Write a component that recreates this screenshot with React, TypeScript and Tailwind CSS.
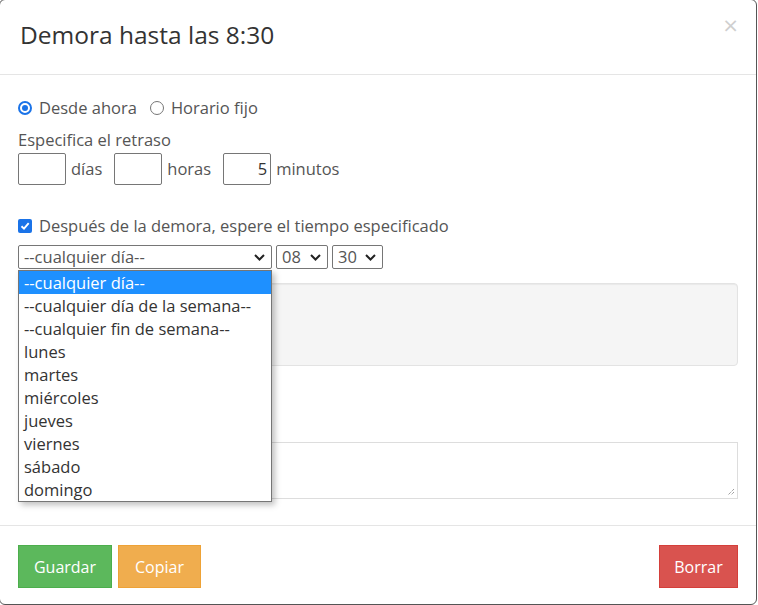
import React from "react";

const Chevron = () => (
  <svg width="11" height="7" viewBox="0 0 11 7" className="shrink-0">
    <path d="M1 1 L5.5 5.5 L10 1" fill="none" stroke="#222" strokeWidth="2" />
  </svg>
);

const FakeSelect = ({ value, w }: { value: string; w: string }) => (
  <div className={`${w} h-[24px] border border-[#767676] rounded-[2px] flex items-center justify-between pl-[5px] pr-[6px] text-[16.5px] text-[#555] bg-white`}>
    <span>{value}</span>
    <Chevron />
  </div>
);

const options = [
  "--cualquier día--",
  "--cualquier día de la semana--",
  "--cualquier fin de semana--",
  "lunes",
  "martes",
  "miércoles",
  "jueves",
  "viernes",
  "sábado",
  "domingo",
];

export default function App() {
  return (
    <div className="w-[758px] h-[605px] overflow-hidden bg-white font-['Open_Sans',sans-serif] text-[#333]">
      <div className="-mt-px -ml-px w-[758px] h-[606px] border border-[#555] rounded-[6px] bg-white flex flex-col">
        {/* header */}
        <div className="h-[75px] border-b border-[#e5e5e5] flex items-start justify-between pl-[20px] pr-[17px] shrink-0">
          <h4 className="mt-[19px] text-[24.5px] leading-[32px] text-[#333]">Demora hasta las 8:30</h4>
          <span className="mt-[12px] text-[20px] leading-[26px] text-[#cfcfcf] font-['DejaVu_Sans',sans-serif]">×</span>
        </div>

        {/* body */}
        <div className="relative px-[18px] pt-[21px] pb-[26px] text-[16.5px] text-[#555] flex-1">
          <div className="flex items-center h-[24px]">
            <span className="w-[14px] h-[14px] rounded-full border-2 border-[#1a73e8] flex items-center justify-center">
              <span className="w-[6px] h-[6px] rounded-full bg-[#1a73e8]" />
            </span>
            <span className="ml-[7px]">Desde ahora</span>
            <span className="ml-[13px] w-[14px] h-[14px] rounded-full border border-[#767676]" />
            <span className="ml-[7px]">Horario fijo</span>
          </div>
          <div className="mt-[9px] h-[22px] leading-[22px]">Especifica el retraso</div>
          <div className="mt-[2px] flex items-center h-[32px]">
            <div className="w-[48px] h-[32px] border border-[#767676] rounded-[2px]" />
            <span className="ml-[5px]">días</span>
            <div className="ml-[12px] w-[48px] h-[32px] border border-[#767676] rounded-[2px]" />
            <span className="ml-[5px]">horas</span>
            <div className="ml-[12px] w-[48px] h-[32px] border border-[#767676] rounded-[2px] flex items-center justify-end pr-[3px] text-[#333]">5</div>
            <span className="ml-[5px]">minutos</span>
          </div>
          <div className="mt-[30px] flex items-center h-[22px]">
            <span className="w-[14px] h-[14px] rounded-[2px] bg-[#1a73e8] flex items-center justify-center">
              <svg width="10" height="10" viewBox="0 0 10 10">
                <path d="M1.5 5.2 L4 7.6 L8.7 2.2" fill="none" stroke="#fff" strokeWidth="1.9" />
              </svg>
            </span>
            <span className="ml-[7px]">Después de la demora, espere el tiempo especificado</span>
          </div>
          <div className="mt-[8px] flex gap-[4px] relative">
            <FakeSelect value="--cualquier día--" w="w-[254px]" />
            <FakeSelect value="08" w="w-[52px]" />
            <FakeSelect value="30" w="w-[51px]" />
            <div className="absolute left-0 top-[25px] w-[254px] border border-[#767676] bg-white shadow-[3px_3px_6px_rgba(0,0,0,0.25)] z-10 text-[16.5px] text-[#333]">
              {options.map((o, i) => (
                <div
                  key={o}
                  className={
                    i === 0
                      ? "h-[23px] leading-[23px] pl-[5px] bg-[#1e90ff] text-white"
                      : "h-[23px] leading-[23px] pl-[5px]"
                  }
                >
                  {o}
                </div>
              ))}
            </div>
          </div>
          <div className="mt-[14px] h-[83px] bg-[#f5f5f5] border border-[#e3e3e3] rounded-[4px] shadow-[inset_0_1px_1px_rgba(0,0,0,0.05)]" />
          <div className="mt-[76px] h-[57px] border border-[#ddd] relative">
            <svg width="8" height="8" viewBox="0 0 8 8" className="absolute right-[2px] bottom-[2px]">
              <path d="M7 1 L1 7 M7 4 L4 7" stroke="#777" strokeWidth="1" strokeDasharray="1 1" />
            </svg>
          </div>
        </div>

        {/* footer */}
        <div className="border-t border-[#e5e5e5] px-[18px] pt-[19px] pb-[16px] flex items-center shrink-0">
          <button className="h-[43px] w-[94px] bg-[#5cb85c] border border-[#4cae4c] text-white text-[16px]">Guardar</button>
          <button className="ml-[6px] h-[43px] w-[83px] bg-[#f0ad4e] border border-[#eea236] text-white text-[16px]">Copiar</button>
          <div className="flex-1" />
          <button className="h-[43px] w-[79px] bg-[#d9534f] border border-[#d43f3a] text-white text-[16px]">Borrar</button>
        </div>
      </div>
    </div>
  );
}
